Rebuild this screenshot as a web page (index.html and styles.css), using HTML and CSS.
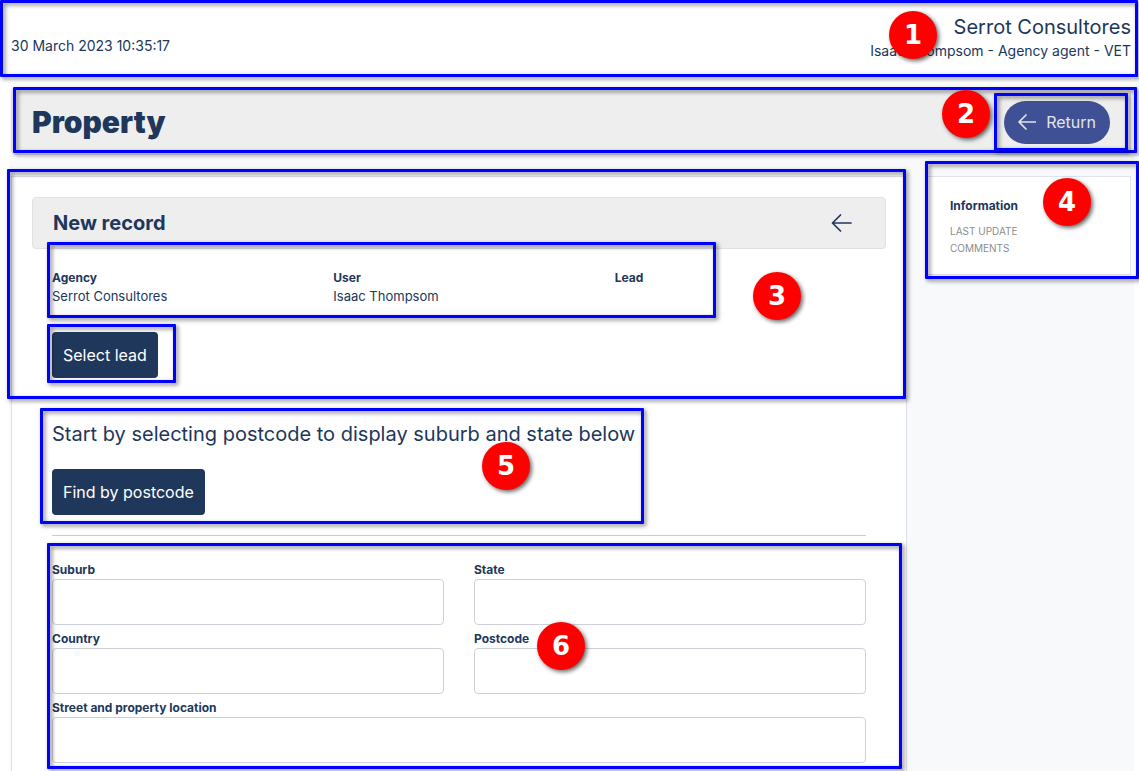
FILE: index.html
```
<!DOCTYPE html>
<html lang="en">
  <head>
    <meta charset="utf-8" />
    <title>Property</title>
    <link rel="stylesheet" href="styles.css" />
  </head>

  <body>
    <header class="topbar">
      <div class="date">30 March 2023 10:35:17</div>
      <div class="account">
        <div class="agency-name">Serrot Consultores</div>
        <div class="agent">Isaac Thompsom - Agency agent - VET</div>
      </div>
      <div class="frame frame-top"></div>
      <span class="badge badge-1">1</span>
    </header>

    <main class="content">
      <div class="titlebar">
        <h1>Property</h1>
        <button type="button" class="return-button">
          <svg width="18" height="16" viewBox="0 0 18 16">
            <path d="M17.5 8H1M8 1L1 8l7 7" />
          </svg>
          Return
        </button>
        <div class="frame frame-title"></div>
        <div class="frame frame-return"></div>
        <span class="badge badge-2">2</span>
      </div>

      <div class="columns">
        <section class="card">
          <div class="card-header">
            <h2>New record</h2>
            <a href="#" class="back" aria-label="Back">
              <svg width="21" height="18" viewBox="0 0 21 18">
                <path d="M20 9H1.5M9.5 1l-8 8 8 8" />
              </svg>
            </a>
          </div>

          <div class="card-body">
            <dl class="summary">
              <div>
                <dt>Agency</dt>
                <dd>Serrot Consultores</dd>
              </div>
              <div>
                <dt>User</dt>
                <dd>Isaac Thompsom</dd>
              </div>
              <div>
                <dt>Lead</dt>
                <dd></dd>
              </div>
            </dl>

            <div class="lead-action">
              <button type="button" class="btn">Select lead</button>
              <div class="frame frame-lead"></div>
            </div>

            <div class="finder">
              <p>Start by selecting postcode to display suburb and state below</p>
              <button type="button" class="btn">Find by postcode</button>
              <div class="frame frame-finder"></div>
              <span class="badge badge-5">5</span>
            </div>

            <hr />

            <form class="address">
              <div class="field">
                <label for="suburb">Suburb</label>
                <input type="text" id="suburb" />
              </div>
              <div class="field">
                <label for="state">State</label>
                <input type="text" id="state" />
              </div>
              <div class="field">
                <label for="country">Country</label>
                <input type="text" id="country" />
              </div>
              <div class="field">
                <label for="postcode">Postcode</label>
                <input type="text" id="postcode" />
              </div>
              <div class="field wide">
                <label for="street">Street and property location</label>
                <input type="text" id="street" />
              </div>
              <div class="frame frame-address"></div>
              <span class="badge badge-6">6</span>
            </form>
          </div>
          <div class="frame frame-record"></div>
          <div class="frame frame-summary"></div>
          <span class="badge badge-3">3</span>
        </section>

        <aside class="info">
          <h3>Information</h3>
          <p>LAST UPDATE</p>
          <p>COMMENTS</p>
          <div class="frame frame-info"></div>
          <span class="badge badge-4">4</span>
        </aside>
      </div>
    </main>
  </body>
</html>
```

FILE: styles.css
```
* {
  box-sizing: border-box;
}

body {
  margin: 0;
  min-height: 100vh;
  display: flex;
  flex-direction: column;
  font-family: Inter, sans-serif;
  font-size: 14px;
  color: #20375c;
  background-color: #fff;
}

h1,
h2,
h3,
p,
dl,
dd {
  margin: 0;
}

svg {
  display: block;
  fill: none;
  stroke: currentColor;
  stroke-width: 1.7;
  stroke-linecap: round;
  stroke-linejoin: round;
}

/* top bar */
.topbar {
  position: relative;
  display: flex;
  justify-content: space-between;
  align-items: center;
  height: 88px;
  padding: 0 8px 14px 11px;
}

.date {
  padding-top: 16px;
}

.account {
  text-align: right;
}

.agency-name {
  font-size: 20px;
  line-height: 28px;
}

.agent {
  line-height: 20px;
}

/* page */
.content {
  flex: 1;
  display: flex;
  flex-direction: column;
  margin: 0 5px 0 9px;
  padding: 0 3px 0 2px;
  background-color: #f8f9fb;
}

.titlebar {
  position: relative;
  display: flex;
  justify-content: space-between;
  align-items: center;
  height: 67px;
  padding: 1px 20px 0;
  border: 1px solid #e0e2e8;
  border-radius: 4px;
  background-color: #eee;
}

h1 {
  font-size: 30px;
  font-weight: 900;
}

.return-button {
  display: flex;
  align-items: center;
  gap: 10px;
  height: 43px;
  padding: 0 14px;
  border: none;
  border-radius: 22px;
  background-color: #405094;
  color: #e2e4ee;
  font: 16px Inter, sans-serif;
}

.columns {
  flex: 1;
  display: grid;
  grid-template-columns: 1fr 204px;
  gap: 20px;
  margin-top: 21px;
}

.card {
  position: relative;
  padding: 20px 20px 8px;
  border: 1px solid #dfe1e8;
  border-bottom: none;
  background-color: #fff;
}

.card-header {
  display: flex;
  justify-content: space-between;
  align-items: center;
  height: 52px;
  padding: 0 33px 0 20px;
  border: 1px solid #dfe1e6;
  border-radius: 4px;
  background-color: #eee;
}

h2 {
  font-size: 20px;
  font-weight: 700;
}

.back {
  color: #20375c;
}

.card-body {
  padding: 20px 20px 0;
}

.summary {
  display: grid;
  grid-template-columns: repeat(3, 1fr);
  gap: 30px;
  min-height: 63px;
  font-size: 13px;
  line-height: 18px;
}

dt {
  font-size: 12px;
  font-weight: 700;
}

.btn {
  height: 46px;
  padding: 0 11px;
  border: none;
  border-radius: 4px;
  background-color: #20375c;
  color: #fff;
  font: 16px Inter, sans-serif;
}

.lead-action {
  position: relative;
}

.finder {
  position: relative;
  margin-top: 42px;
}

.finder p {
  margin-bottom: 21px;
  font-size: 20px;
  line-height: 28px;
}

hr {
  margin: 20px 0 25px;
  border: none;
  border-top: 1px solid #c8cad4;
}

.address {
  position: relative;
  display: grid;
  grid-template-columns: 1fr 1fr;
  gap: 5px 30px;
}

.wide {
  grid-column: 1 / -1;
}

.field label {
  display: block;
  font-size: 12px;
  font-weight: 700;
  line-height: 18px;
}

.field input {
  display: block;
  width: 100%;
  height: 46px;
  padding: 0 12px;
  border: 1px solid #cdd1da;
  border-radius: 4px;
  background-color: #fff;
  font: 14px Inter, sans-serif;
}

.info {
  position: relative;
  align-self: start;
  height: 99px;
  padding: 20px 22px;
  border: 1px solid #dfe4f0;
  background-color: #fff;
  color: #8c8c8c;
  font-size: 10px;
  line-height: 17px;
}

h3 {
  margin-bottom: 9px;
  color: #20375c;
  font-size: 12px;
  font-weight: 700;
}

/* numbered callouts, placed against the section they mark */
.frame {
  position: absolute;
  border: 3px solid #00f;
  border-radius: 1px;
  filter: drop-shadow(2px 2px 2px rgba(0, 0, 0, 0.5));
  pointer-events: none;
}

.frame-top {
  inset: 0 1px 11px 0;
}

.frame-title {
  inset: -2px -7px 1px 1px;
}

.frame-return {
  top: 4px;
  right: 2px;
  width: 134px;
  height: 58px;
}

.frame-record {
  top: -8px;
  left: -5px;
  right: 0;
  height: 230px;
}

.frame-summary {
  top: 65px;
  left: 35px;
  right: 190px;
  height: 76px;
}

.frame-lead {
  top: -8px;
  left: -5px;
  width: 129px;
  height: 59px;
}

.frame-finder {
  top: -12px;
  left: -12px;
  width: 604px;
  height: 116px;
}

.frame-address {
  inset: -18px -36px -6px -5px;
}

.frame-info {
  inset: -16px -9px -5px -3px;
}

.badge {
  position: absolute;
  z-index: 1;
  width: 48px;
  height: 48px;
  border-radius: 50%;
  background-color: #f00;
  box-shadow: 2px 2px 4px rgba(0, 0, 0, 0.6);
  color: #fff;
  font: bold 26px/48px "DejaVu Sans", sans-serif;
  text-align: center;
}

.badge-1 {
  top: 11px;
  right: 202px;
}

.badge-2 {
  top: 1px;
  right: 140px;
}

.badge-3 {
  top: 95px;
  right: 105px;
}

.badge-4 {
  top: 1px;
  right: 39px;
}

.badge-5 {
  top: 22px;
  left: 430px;
}

.badge-6 {
  top: 61px;
  left: 485px;
}
```
